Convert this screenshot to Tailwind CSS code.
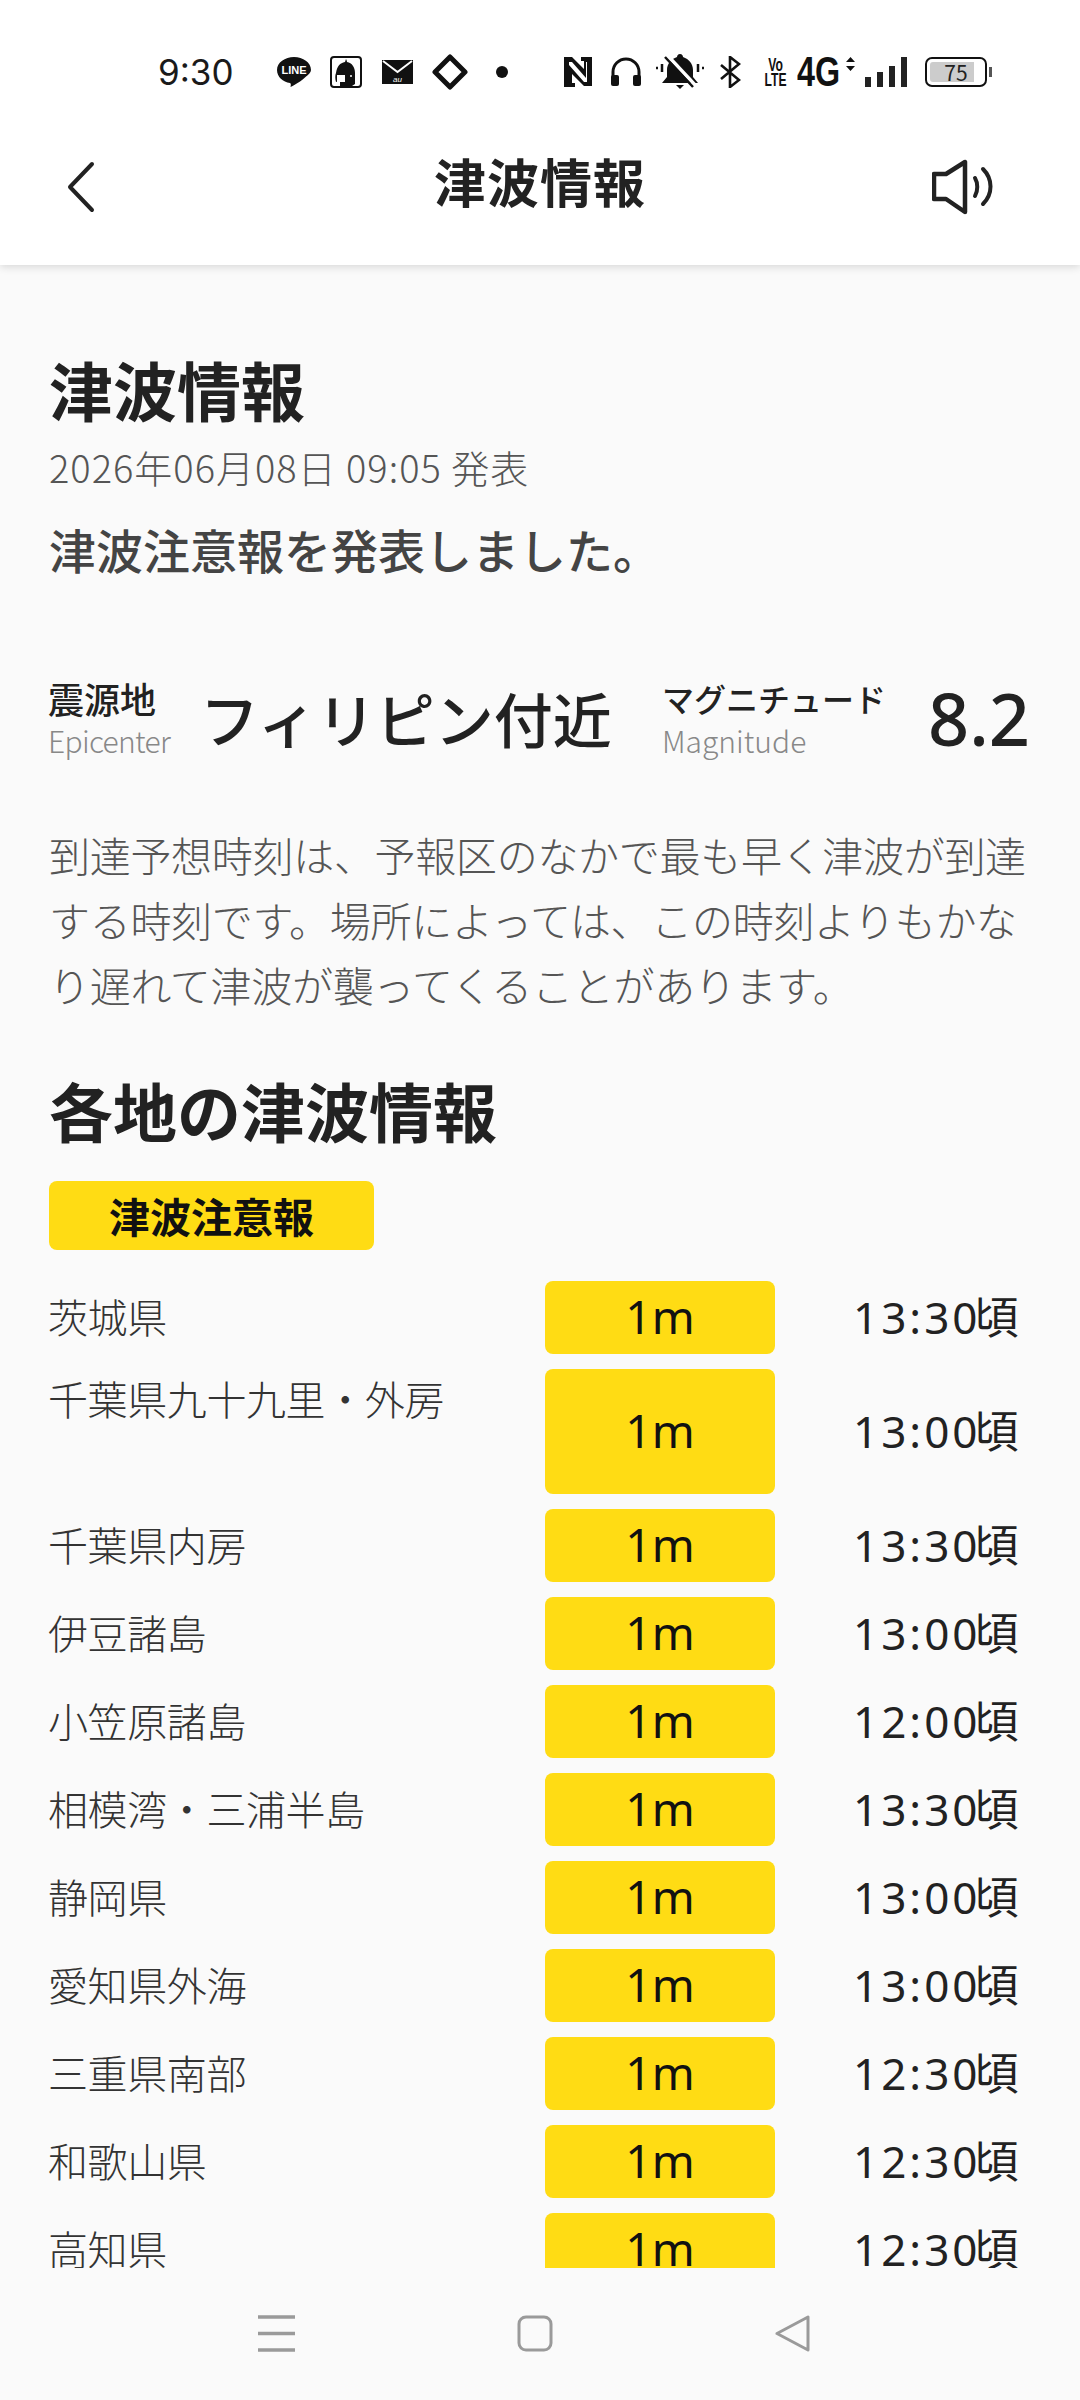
<!DOCTYPE html>
<html lang="ja">
<head>
  <meta charset="UTF-8">
  <meta name="viewport" content="width=device-width, initial-scale=1.0">
  <title>津波情報</title>
  <script src="https://cdn.jsdelivr.net/npm/@tailwindcss/browser@4"></script>
</head>
<body class="bg-[#fafafa] font-['Noto_Sans_CJK_JP',sans-serif] text-[#222]">
  <div class="flex flex-col w-[1080px] h-[2400px] overflow-hidden">

    <header class="relative z-10 h-[265px] bg-white shadow-[0_2px_8px_rgba(0,0,0,0.14)]">
      <!-- status bar -->
      <div class="flex items-center h-[48px] mt-[48px] pl-[158px] text-[#1a1a1a]">
        <span class="w-[119px] font-['Inter',sans-serif] text-[35px] leading-[48px]">9:30</span>
        <svg class="w-[34px] h-[32px]" viewBox="0 0 34 32">
          <path fill="#111" d="M17 1C8 1 0 6.500 0 14c0 7 6 12 13 13 1 .300 1 2 .5 4 4-2 11-6 15-10 3-2.500 5.500-4.500 5.500-7C34 6.500 26 1 17 1z"/>
          <text x="17" y="18" text-anchor="middle" fill="#fff" font-size="11" font-weight="700" font-family="Liberation Sans">LINE</text>
        </svg>
        <svg class="ml-[19px] w-[32px] h-[32px]" viewBox="0 0 32 32">
          <rect x="1" y="1" width="30" height="30" rx="3" fill="#fff" stroke="#111" stroke-width="2"/>
          <path fill="#111" d="M16 3c1 2 1 3 1 3 5 1 8 5 8 11v11l-3 2H10v-5l-4 1c-1-3-1-7 0-9 1-7 4-10 9-11z"/>
          <path fill="#fff" d="M7 19h8v7H7z"/>
          <circle cx="21" cy="20" r="1" fill="#fff"/>
        </svg>
        <svg class="ml-[20px] w-[31px] h-[26px]" viewBox="0 0 31 26">
          <path fill="#111" d="M0 1h31v24H0z"/>
          <path fill="none" stroke="#fff" stroke-width="2" d="M1 2l14.500 11L30 2"/>
          <text x="15.500" y="23" text-anchor="middle" fill="#fff" font-size="8" font-style="italic" font-family="Liberation Sans">au</text>
        </svg>
        <svg class="ml-[19px] w-[36px] h-[36px]" viewBox="0 0 36 36">
          <path fill="none" stroke="#111" stroke-width="5" stroke-linejoin="round" d="M18 3l15 15-15 15L3 18z"/>
        </svg>
        <span class="ml-[28px] w-[12px] h-[12px] rounded-full bg-[#111]"></span>

        <svg class="ml-[55px] w-[30px] h-[30px]" viewBox="0 0 30 30">
          <path fill="#111" d="M1 0h8l12 12V4h-3V0h11v29h-8L9 17v9h3v4H1z"/>
          <path fill="#fff" d="M6 5v20h0V8l15 17h3V5h-1v16L9 5z"/>
        </svg>
        <svg class="ml-[17px] w-[32px] h-[30px]" viewBox="0 0 32 30">
          <path fill="none" stroke="#111" stroke-width="3" d="M3 20v-5a13 13 0 0 1 26 0v5"/>
          <rect x="1" y="18" width="8" height="11" rx="2" fill="#111"/>
          <rect x="23" y="18" width="8" height="11" rx="2" fill="#111"/>
        </svg>
        <svg class="ml-[14px] w-[48px] h-[36px]" viewBox="0 0 48 36">
          <path fill="#111" d="M24 0c2 0 3 1.500 3 3 6 2 10 7 10 13v7l5 6H6l5-6v-7C11 10 15 5 21 3c0-1.500 1-3 3-3z"/>
          <path fill="#111" d="M20 31h8l-4 4z"/>
          <path stroke="#fff" stroke-width="3.500" fill="none" d="M12 2l28 30"/>
          <path stroke="#111" stroke-width="2.500" fill="none" d="M9 3l28 30M0 14h2M6 10v8M46 14h2M42 10v8"/>
        </svg>
        <svg class="ml-[16px] w-[21px] h-[32px]" viewBox="0 0 21 32">
          <path fill="none" stroke="#111" stroke-width="2.600" d="M1 9l18 15-9 7V1l9 7L1 23"/>
        </svg>
        <!-- condensed network labels -->
        <div class="ml-[23px] mr-[-13px] w-[36px] flex flex-col items-center origin-left scale-x-[0.64] font-['Liberation_Sans',sans-serif] font-bold text-[#111] text-[19px] leading-[15px]">
          <span>Vo</span>
          <span>LTE</span>
        </div>
        <span class="ml-[10px] mr-[-13px] w-[56px] origin-left scale-x-[0.77] font-['Liberation_Sans',sans-serif] font-bold text-[42px] leading-[48px] text-[#111]">4G</span>
        <svg class="ml-[6px] mb-[16px] w-[9px] h-[14px]" viewBox="0 0 9 14">
          <path fill="#111" d="M4.500 0L9 5H0zM0 9h9l-4.500 5z"/>
        </svg>
        <svg class="ml-[10px] w-[43px] h-[30px]" viewBox="0 0 43 30">
          <path fill="#222" d="M0 20h6v10H0zM12 15h6v15h-6zM24 9h6v21h-6zM36 0h6v30h-6z"/>
        </svg>
        <div class="relative ml-[17px] flex items-center justify-center w-[62px] h-[30px] rounded-[7px] border-2 border-[#111] text-[21px] leading-none text-[#222]">
          <span class="absolute left-[3px] top-[3px] bottom-[3px] w-[44px] rounded-l-[3px] bg-[#ccc]"></span>
          <span class="relative">75</span>
        </div>
        <span class="ml-[2px] w-[3px] h-[10px] bg-[#555]"></span>
      </div>

      <!-- title row -->
      <div class="relative flex items-center justify-center h-[169px]">
        <svg class="absolute left-[67px] top-[65px] w-[28px] h-[52px]" viewBox="0 0 28 52">
          <path fill="none" stroke="#222" stroke-width="4" stroke-linecap="round" stroke-linejoin="round" d="M25 3L3 26l22 23"/>
        </svg>
        <h1 class="text-[52px] leading-[70px] font-bold tracking-[1px]">津波情報</h1>
        <svg class="absolute left-[932px] top-[63px] w-[62px] h-[56px]" viewBox="0 0 62 56">
          <path fill="none" stroke="#222" stroke-width="4.500" stroke-linejoin="round" d="M2 15h12L33 3v50L14 40H2z"/>
          <path fill="none" stroke="#222" stroke-width="4" stroke-linecap="round" d="M43 19c3 5 3 13 0 18M51 10c10 10 10 25 0 35"/>
        </svg>
      </div>
    </header>

    <main class="flex-1 overflow-hidden pl-[49px]">
      <h2 class="mt-[91px] text-[64px] leading-[64px] font-bold">津波情報</h2>
      <p class="mt-[27px] text-[38px] leading-[40px] tracking-[1px] font-light text-[#555]">2026年06月08日 09:05 発表</p>
      <p class="mt-[34px] text-[47px] leading-[56px] font-medium text-[#444]">津波注意報を発表しました。</p>

      <div class="flex items-center mt-[99px]">
        <div class="w-[151px]">
          <p class="text-[36px] leading-[44px] font-medium ml-[-1px]">震源地</p>
          <p class="text-[30px] leading-[40px] tracking-[-0.7px] font-light text-[#888] ml-[-1px]">Epicenter</p>
        </div>
        <p class="w-[462px] text-[59px] leading-[80px] font-medium">フィリピン付近</p>
        <div class="w-[266px]">
          <p class="text-[32px] leading-[44px] font-medium">マグニチュード</p>
          <p class="text-[30px] leading-[40px] font-light text-[#888]">Magnitude</p>
        </div>
        <p class="font-['Noto_Sans',sans-serif] text-[72px] leading-[80px] font-medium">8.2</p>
      </div>

      <p class="mt-[62px] w-[990px] text-[41px] leading-[65px] tracking-[-0.3px] font-light text-[#555]">到達予想時刻は、予報区のなかで最も早く津波が到達する時刻です。場所によっては、この時刻よりもかなり遅れて津波が襲ってくることがあります。</p>

      <h2 class="mt-[57px] text-[64px] leading-[70px] font-bold">各地の津波情報</h2>

      <div class="flex items-center justify-center mt-[37px] w-[325px] h-[69px] rounded-[8px] bg-[#ffdc14] text-[41px] font-bold text-[#111]">津波注意報</div>

      <div class="flex flex-col gap-[15px] mt-[31px]">
        <div class="flex items-center h-[73px]">
          <span class="w-[496px] mb-[4px] text-[40px] tracking-[-0.4px] font-light text-[#333] ml-[-1px] mr-[1px]">茨城県</span>
          <span class="flex items-center justify-center w-[230px] h-full pb-[2px] rounded-[8px] bg-[#ffdc14] font-['Noto_Sans',sans-serif] text-[46px] text-[#111]">1m</span>
          <span class="ml-[78px] mb-[3px] font-['Noto_Sans',sans-serif] text-[44px] tracking-[3px] whitespace-nowrap">13:30<span class="font-['Noto_Sans_CJK_JP'] ml-[-6px]">頃</span></span>
        </div>
        <div class="flex items-center h-[125px]">
          <span class="self-start w-[496px] text-[40px] tracking-[-0.4px] leading-[58px] font-light text-[#333] ml-[-1px] mr-[1px]">千葉県九十九里・外房</span>
          <span class="flex items-center justify-center w-[230px] h-full pb-[2px] rounded-[8px] bg-[#ffdc14] font-['Noto_Sans',sans-serif] text-[46px] text-[#111]">1m</span>
          <span class="ml-[78px] mb-[3px] font-['Noto_Sans',sans-serif] text-[44px] tracking-[3px] whitespace-nowrap">13:00<span class="font-['Noto_Sans_CJK_JP'] ml-[-6px]">頃</span></span>
        </div>
        <div class="flex items-center h-[73px]">
          <span class="w-[496px] mb-[4px] text-[40px] tracking-[-0.4px] font-light text-[#333] ml-[-1px] mr-[1px]">千葉県内房</span>
          <span class="flex items-center justify-center w-[230px] h-full pb-[2px] rounded-[8px] bg-[#ffdc14] font-['Noto_Sans',sans-serif] text-[46px] text-[#111]">1m</span>
          <span class="ml-[78px] mb-[3px] font-['Noto_Sans',sans-serif] text-[44px] tracking-[3px] whitespace-nowrap">13:30<span class="font-['Noto_Sans_CJK_JP'] ml-[-6px]">頃</span></span>
        </div>
        <div class="flex items-center h-[73px]">
          <span class="w-[496px] mb-[4px] text-[40px] tracking-[-0.4px] font-light text-[#333] ml-[-1px] mr-[1px]">伊豆諸島</span>
          <span class="flex items-center justify-center w-[230px] h-full pb-[2px] rounded-[8px] bg-[#ffdc14] font-['Noto_Sans',sans-serif] text-[46px] text-[#111]">1m</span>
          <span class="ml-[78px] mb-[3px] font-['Noto_Sans',sans-serif] text-[44px] tracking-[3px] whitespace-nowrap">13:00<span class="font-['Noto_Sans_CJK_JP'] ml-[-6px]">頃</span></span>
        </div>
        <div class="flex items-center h-[73px]">
          <span class="w-[496px] mb-[4px] text-[40px] tracking-[-0.4px] font-light text-[#333] ml-[-1px] mr-[1px]">小笠原諸島</span>
          <span class="flex items-center justify-center w-[230px] h-full pb-[2px] rounded-[8px] bg-[#ffdc14] font-['Noto_Sans',sans-serif] text-[46px] text-[#111]">1m</span>
          <span class="ml-[78px] mb-[3px] font-['Noto_Sans',sans-serif] text-[44px] tracking-[3px] whitespace-nowrap">12:00<span class="font-['Noto_Sans_CJK_JP'] ml-[-6px]">頃</span></span>
        </div>
        <div class="flex items-center h-[73px]">
          <span class="w-[496px] mb-[4px] text-[40px] tracking-[-0.4px] font-light text-[#333] ml-[-1px] mr-[1px]">相模湾・三浦半島</span>
          <span class="flex items-center justify-center w-[230px] h-full pb-[2px] rounded-[8px] bg-[#ffdc14] font-['Noto_Sans',sans-serif] text-[46px] text-[#111]">1m</span>
          <span class="ml-[78px] mb-[3px] font-['Noto_Sans',sans-serif] text-[44px] tracking-[3px] whitespace-nowrap">13:30<span class="font-['Noto_Sans_CJK_JP'] ml-[-6px]">頃</span></span>
        </div>
        <div class="flex items-center h-[73px]">
          <span class="w-[496px] mb-[4px] text-[40px] tracking-[-0.4px] font-light text-[#333] ml-[-1px] mr-[1px]">静岡県</span>
          <span class="flex items-center justify-center w-[230px] h-full pb-[2px] rounded-[8px] bg-[#ffdc14] font-['Noto_Sans',sans-serif] text-[46px] text-[#111]">1m</span>
          <span class="ml-[78px] mb-[3px] font-['Noto_Sans',sans-serif] text-[44px] tracking-[3px] whitespace-nowrap">13:00<span class="font-['Noto_Sans_CJK_JP'] ml-[-6px]">頃</span></span>
        </div>
        <div class="flex items-center h-[73px]">
          <span class="w-[496px] mb-[4px] text-[40px] tracking-[-0.4px] font-light text-[#333] ml-[-1px] mr-[1px]">愛知県外海</span>
          <span class="flex items-center justify-center w-[230px] h-full pb-[2px] rounded-[8px] bg-[#ffdc14] font-['Noto_Sans',sans-serif] text-[46px] text-[#111]">1m</span>
          <span class="ml-[78px] mb-[3px] font-['Noto_Sans',sans-serif] text-[44px] tracking-[3px] whitespace-nowrap">13:00<span class="font-['Noto_Sans_CJK_JP'] ml-[-6px]">頃</span></span>
        </div>
        <div class="flex items-center h-[73px]">
          <span class="w-[496px] mb-[4px] text-[40px] tracking-[-0.4px] font-light text-[#333] ml-[-1px] mr-[1px]">三重県南部</span>
          <span class="flex items-center justify-center w-[230px] h-full pb-[2px] rounded-[8px] bg-[#ffdc14] font-['Noto_Sans',sans-serif] text-[46px] text-[#111]">1m</span>
          <span class="ml-[78px] mb-[3px] font-['Noto_Sans',sans-serif] text-[44px] tracking-[3px] whitespace-nowrap">12:30<span class="font-['Noto_Sans_CJK_JP'] ml-[-6px]">頃</span></span>
        </div>
        <div class="flex items-center h-[73px]">
          <span class="w-[496px] mb-[4px] text-[40px] tracking-[-0.4px] font-light text-[#333] ml-[-1px] mr-[1px]">和歌山県</span>
          <span class="flex items-center justify-center w-[230px] h-full pb-[2px] rounded-[8px] bg-[#ffdc14] font-['Noto_Sans',sans-serif] text-[46px] text-[#111]">1m</span>
          <span class="ml-[78px] mb-[3px] font-['Noto_Sans',sans-serif] text-[44px] tracking-[3px] whitespace-nowrap">12:30<span class="font-['Noto_Sans_CJK_JP'] ml-[-6px]">頃</span></span>
        </div>
        <div class="flex items-center h-[73px]">
          <span class="w-[496px] mb-[4px] text-[40px] tracking-[-0.4px] font-light text-[#333] ml-[-1px] mr-[1px]">高知県</span>
          <span class="flex items-center justify-center w-[230px] h-full pb-[2px] rounded-[8px] bg-[#ffdc14] font-['Noto_Sans',sans-serif] text-[46px] text-[#111]">1m</span>
          <span class="ml-[78px] mb-[3px] font-['Noto_Sans',sans-serif] text-[44px] tracking-[3px] whitespace-nowrap">12:30<span class="font-['Noto_Sans_CJK_JP'] ml-[-6px]">頃</span></span>
        </div>
      </div>
    </main>

    <!-- system navigation -->
    <nav class="flex items-start h-[132px] pt-[47px] pl-[258px] bg-[#fafafa]">
      <svg class="w-[37px] h-[37px]" viewBox="0 0 37 37">
        <path stroke="#9a9a9a" stroke-width="3.500" d="M0 2h37M0 18.500h37M0 35h37"/>
      </svg>
      <svg class="ml-[222px] w-[36px] h-[37px]" viewBox="0 0 36 37">
        <rect x="2" y="2" width="32" height="33" rx="7" fill="none" stroke="#9a9a9a" stroke-width="3"/>
      </svg>
      <svg class="ml-[222px] w-[36px] h-[37px]" viewBox="0 0 36 37">
        <path fill="none" stroke="#9a9a9a" stroke-width="3" stroke-linejoin="round" d="M33 2v33L2 18.500z"/>
      </svg>
    </nav>
  </div>
</body>
</html>
